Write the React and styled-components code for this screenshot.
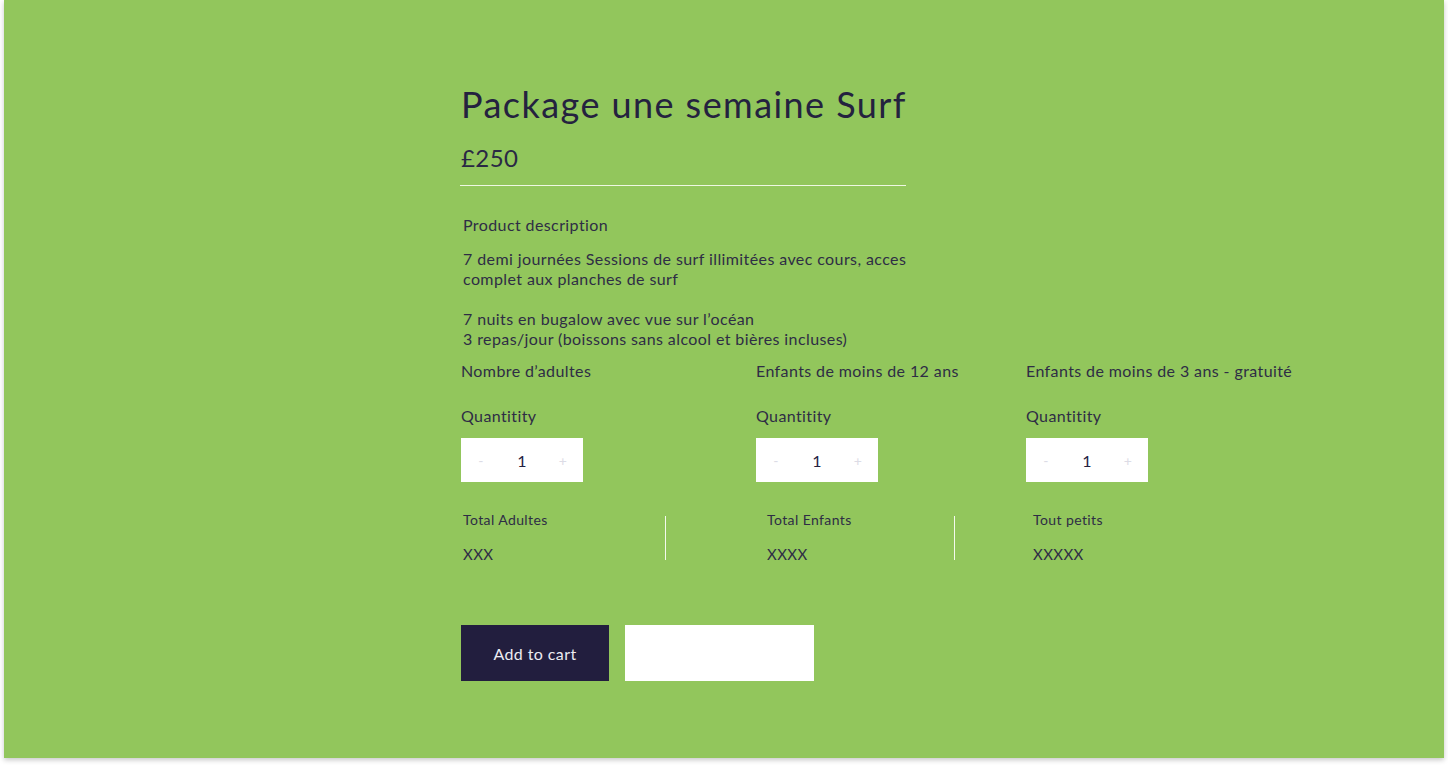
import styled, { createGlobalStyle } from 'styled-components';

const GlobalStyle = createGlobalStyle`
    html, body {
        margin: 0;
        padding: 0;
        background: #ffffff;
    }
    body {
        padding-bottom: 8px;
        font-family: 'Lato', 'Liberation Sans', sans-serif;
        color: #2e2d45;
        letter-spacing: 0.025em;
    }
`;

const columns = [
    { label: 'Nombre d’adultes', qty: 1 },
    { label: 'Enfants de moins de 12 ans', qty: 1 },
    { label: 'Enfants de moins de 3 ans - gratuité', qty: 1 },
];

const App = () => {
    return (
        <>
            <GlobalStyle />
            <Frame>
                <Content>
                    <Title>Package une semaine Surf</Title>
                    <Price>£250</Price>
                    <Divider />
                    <SectionLabel>Product description</SectionLabel>
                    <Description>
                        7 demi journées Sessions de surf illimitées avec cours, acces
                        <br />
                        complet aux planches de surf
                        <br />
                        <br />
                        7 nuits en bugalow avec vue sur l’océan
                        <br />
                        3 repas/jour (boissons sans alcool et bières incluses)
                    </Description>

                    <Columns>
                        {columns.map(col => (
                            <Column key={col.label}>
                                <ColumnLabel>{col.label}</ColumnLabel>
                                <QtyLabel>Quantitity</QtyLabel>
                                <Stepper>
                                    <StepButton>-</StepButton>
                                    <StepValue>{col.qty}</StepValue>
                                    <StepButton>+</StepButton>
                                </Stepper>
                            </Column>
                        ))}
                    </Columns>

                    <Totals>
                        <TotalCell $width="202px">
                            <TotalLabel>Total Adultes</TotalLabel>
                            <TotalValue>XXX</TotalValue>
                        </TotalCell>
                        <VDivider />
                        <TotalCell $width="288px" $pad="101px">
                            <TotalLabel>Total Enfants</TotalLabel>
                            <TotalValue>XXXX</TotalValue>
                        </TotalCell>
                        <VDivider />
                        <TotalCell $pad="78px">
                            <TotalLabel>Tout petits</TotalLabel>
                            <TotalValue>XXXXX</TotalValue>
                        </TotalCell>
                    </Totals>

                    <Actions>
                        <CartButton>Add to cart</CartButton>
                        <BlankButton />
                    </Actions>
                </Content>
            </Frame>
        </>
    );
};

const Frame = styled.div`
    width: 1440px;
    height: 758px;
    margin: 0 4px;
    background: #92c65c;
    box-shadow: 0 2px 5px rgba(0, 0, 0, 0.22);
    box-sizing: border-box;
    padding: 82px 0 0 457px;
`;

const Content = styled.div`
    display: flex;
    flex-direction: column;
    align-items: flex-start;
`;

const Title = styled.h1`
    margin: 0;
    font-size: 36px;
    line-height: 44px;
    font-weight: 400;
    letter-spacing: 0.04em;
    color: #24223f;
`;

const Price = styled.div`
    margin-top: 17px;
    font-size: 24px;
    line-height: 30px;
    color: #2a2944;
`;

const Divider = styled.hr`
    width: 446px;
    margin: 12px 0 0 -1px;
    border: 0;
    border-top: 1px solid #eef7e2;
    height: 0;
`;

const SectionLabel = styled.div`
    margin: 29px 0 0 2px;
    font-size: 16px;
    line-height: 20px;
`;

const Description = styled.p`
    margin: 14px 0 0 2px;
    font-size: 16px;
    line-height: 20px;
`;

const Columns = styled.div`
    display: grid;
    grid-template-columns: 295px 270px auto;
    margin-top: 12px;
`;

const Column = styled.div`
    display: flex;
    flex-direction: column;
    align-items: flex-start;
`;

const ColumnLabel = styled.div`
    font-size: 16px;
    line-height: 20px;
    white-space: nowrap;
`;

const QtyLabel = styled.div`
    margin-top: 25px;
    font-size: 16px;
    line-height: 20px;
`;

const Stepper = styled.div`
    margin-top: 12px;
    width: 122px;
    height: 44px;
    background: #ffffff;
    display: grid;
    grid-template-columns: 40px 42px 40px;
    align-items: center;
    justify-items: center;
`;

const StepButton = styled.span`
    font-size: 14px;
    color: #dcdce6;
`;

const StepValue = styled.span`
    font-size: 16px;
    color: #24223f;
`;

const Totals = styled.div`
    display: flex;
    align-items: flex-start;
    margin: 29px 0 0 2px;
`;

const TotalCell = styled.div`
    width: ${p => p.$width || 'auto'};
    padding-left: ${p => p.$pad || '0'};
    box-sizing: border-box;
    display: flex;
    flex-direction: column;
`;

const TotalLabel = styled.div`
    font-size: 14px;
    line-height: 18px;
`;

const TotalValue = styled.div`
    margin-top: 15px;
    font-size: 15px;
    line-height: 20px;
`;

const VDivider = styled.div`
    width: 1px;
    height: 44px;
    margin-top: 5px;
    background: #f4f9ee;
`;

const Actions = styled.div`
    display: flex;
    gap: 16px;
    margin-top: 61px;
`;

const CartButton = styled.button`
    width: 148px;
    height: 56px;
    border: 0;
    background: #221e3e;
    color: #ececf2;
    font-family: inherit;
    font-size: 16px;
    letter-spacing: 0.025em;
    cursor: pointer;
`;

const BlankButton = styled.button`
    width: 189px;
    height: 56px;
    border: 0;
    background: #ffffff;
`;

export default App;
